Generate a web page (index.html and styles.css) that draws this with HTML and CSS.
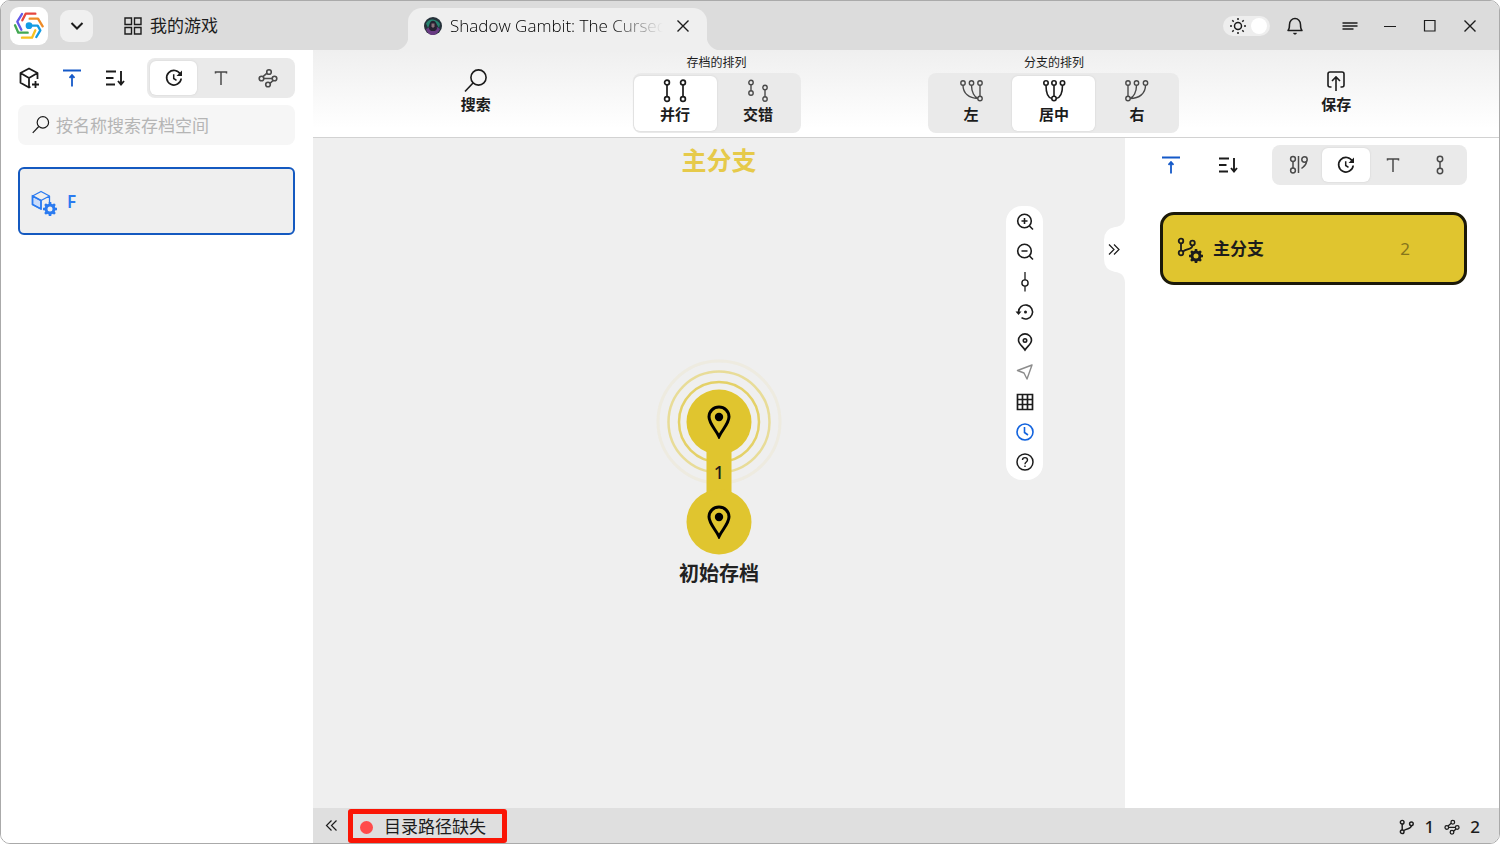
FILE: index.html
```html
<!DOCTYPE html>
<html lang="zh-CN">
<head>
<meta charset="utf-8">
<title>我的游戏</title>
<link rel="stylesheet" href="styles.css">
</head>
<body>
<svg class="defs" aria-hidden="true">
  <symbol id="sort-top" viewBox="0 0 20 20"><path d="M1 2.500h18" stroke-width="2"/><path d="M10 18.500V7.500M7.500 9.800L10 7l2.500 2.800" stroke-width="1.800"/></symbol>
  <symbol id="sort-down" viewBox="0 0 20 20"><path d="M1 3.500h10M1 10h7.500M1 16.500h9M16 3v13M13 13l3 3.500 3-3.500" stroke-width="1.900"/></symbol>
  <symbol id="recent" viewBox="0 0 20 20"><path d="M16.500 6.500A7.300 7.300 0 1 0 17.200 10.500" stroke-width="1.700"/><path d="M18 2.500v5.500h-5.500z" fill="currentColor" stroke="none"/><path d="M9.700 6.300v4.200l2.800 1.800" stroke-width="1.500"/></symbol>
  <symbol id="letter" viewBox="0 0 20 20"><path d="M4.500 5.500V4h11v1.500M10 4v13" stroke-width="1.500"/></symbol>
  <symbol id="nodes" viewBox="0 0 20 20"><g stroke-width="1.600"><circle cx="3.500" cy="10.500" r="2.300"/><circle cx="16.500" cy="10.500" r="2.300"/><circle cx="11" cy="4" r="2.300"/><circle cx="10" cy="16.500" r="2.300"/><path d="M5.800 10.500h8.400M5 8.700l4-3.500M12 15.300l3-2.800"/></g></symbol>
  <symbol id="magnifier" viewBox="0 0 24 24"><circle cx="14.500" cy="8.500" r="7.600"/><path d="M9 14l-8 8.500"/></symbol>
  <symbol id="branch" viewBox="0 0 20 20"><g stroke-width="1.800"><circle cx="4" cy="4" r="2.300"/><circle cx="4" cy="16" r="2.300"/><circle cx="15.500" cy="6" r="2.300"/><path d="M4 6.200v7.600M15.500 8.200c0 4.500-5 3-9.500 6.200"/></g></symbol>
  <symbol id="gear" viewBox="0 0 14 14"><circle cx="7" cy="7" r="4" stroke-width="3"/><path d="M7 0v2.500M7 11.500V14M0 7h2.500M11.500 7H14M2.050 2.050l1.800 1.800M10.150 10.150l1.800 1.800M2.050 11.950l1.800-1.800M10.150 3.850l1.800-1.800" stroke-width="2.600"/></symbol>
  <symbol id="pin" viewBox="0 0 24 34"><path d="M12 31.500C9 25 2 18.500 2 11.800a10 9.800 0 0 1 20 0C22 18.500 15 25 12 31.500z" stroke-width="3"/><circle cx="12" cy="12" r="4.200" fill="currentColor" stroke="none"/></symbol>
  <symbol id="close" viewBox="0 0 20 20"><path d="M4.500 4.500l11 11M15.500 4.500l-11 11" stroke-width="1.400"/></symbol>
</svg>
<div class="window">
  <header class="titlebar">
    <button class="logo" aria-label="主页">
      <svg viewBox="30 18 114 114" width="38" height="38" class="logo-art">
        <path d="M66 39L52 62l12 24" stroke="#6259e8"/><path d="M67 58l10-20h29" stroke="#e5473f"/><path d="M89 53h25l14 23" stroke="#ee8b27"/>
        <path d="M45 73l10 22h28" stroke="#43a853"/><path d="M66 110h30l10-22" stroke="#f7c120"/><path d="M87 74h26l8 14-12 20" stroke="#129ce4"/>
        <circle cx="87" cy="74" r="10" fill="#129ce4" stroke="none"/>
      </svg>
    </button>
    <button class="chevron" aria-label="展开"><svg class="i20" viewBox="0 0 20 20"><path d="M4.500 7l5.500 5.500L15.500 7" stroke-width="2"/></svg></button>
    <button class="home-tab"><svg class="i20" viewBox="0 0 20 20"><path d="M2 2h6.500v6.500H2zM11.500 2H18v6.500h-6.500zM2 11.500h6.500V18H2zM11.500 11.500H18V18h-6.500z" stroke-width="1.400"/></svg>我的游戏</button>
    <div class="tab">
      <svg class="avatar" viewBox="0 0 18 18"><circle cx="9" cy="9" r="9" fill="#26313a" stroke="none"/><path d="M2 6.500C3.500 3 7 2 9 2.500s5 1 7 4.500l-1 4-3-5H6l-2 5z" fill="#27836f" stroke="none"/><path d="M2 12l4-2 3 2 4-2 3 2c-2 4-4.500 6-7.500 6S3 15.500 2 12z" fill="#693a83" stroke="none"/><path d="M6 6c1-3 5-3 6 0l1 6-2 2H7l-2-2z" fill="#252131" stroke="none"/><path d="M7.500 6.500h3v3L9 11l-1.500-1.500z" fill="#89707b" stroke="none"/></svg>
      <span class="tab-title">Shadow Gambit: The Cursed</span>
      <button class="tab-close" aria-label="关闭标签"><svg class="i20"><use href="#close"/></svg></button>
    </div>
    <div class="window-actions">
      <button class="theme" role="switch" aria-checked="false" aria-label="主题"><svg class="i18" viewBox="0 0 18 18"><circle cx="9" cy="9" r="3.500" stroke-width="1.500"/><path d="M9 1v2M9 15v2M1 9h2M15 9h2M3.300 3.300l1.400 1.400M13.300 13.300l1.400 1.400M3.300 14.700l1.400-1.400M13.300 4.700l1.400-1.400" stroke-width="1.500"/></svg><span class="knob"></span></button>
      <button class="bell" aria-label="通知"><svg class="i20" viewBox="0 0 20 20"><path d="M3 14.500c1.500-1.500 1.500-3 1.500-6C4.500 5 7 2.500 10 2.500S15.500 5 15.500 8.500c0 3 0 4.500 1.500 6z" stroke-width="1.500" stroke-linejoin="round"/><path d="M8.500 17.200L10 18l1.500-.8" stroke-width="1.500"/></svg></button>
      <button aria-label="菜单"><svg class="i20" viewBox="0 0 20 20"><path d="M2.500 7h15M2.500 10h15M2.500 13h11" stroke-width="1.600"/></svg></button>
      <button aria-label="最小化"><svg class="i20" viewBox="0 0 20 20"><path d="M4 10.500h12" stroke-width="1.100"/></svg></button>
      <button aria-label="最大化"><svg class="i20" viewBox="0 0 20 20"><path d="M4.500 4.500h10.500v10.500H4.500z" stroke-width="1.200"/></svg></button>
      <button aria-label="关闭"><svg class="i20"><use href="#close"/></svg></button>
    </div>
  </header>
  <div class="workspace">
    <aside class="sidebar">
      <div class="side-tools">
        <button aria-label="新建"><svg class="i22" viewBox="0 0 22 22"><path d="M12.500 19.700L11 20.500l-8.500-4.700V6L11 1.500 19.500 6v6M2.500 6L11 11l8.500-5M11 11v9.500" stroke-width="1.800" stroke-linejoin="round"/><path d="M17.500 14v7M14 17.500h7" stroke-width="1.800"/></svg></button>
        <button class="blue" aria-label="升序"><svg class="i20"><use href="#sort-top"/></svg></button>
        <button aria-label="排序"><svg class="i20"><use href="#sort-down"/></svg></button>
        <div class="segment icons">
          <button class="selected" aria-label="时间"><svg class="i20"><use href="#recent"/></svg></button>
          <button aria-label="名称"><svg class="i20"><use href="#letter"/></svg></button>
          <button aria-label="数量"><svg class="i20"><use href="#nodes"/></svg></button>
        </div>
      </div>
      <label class="search"><svg class="i18"><use href="#magnifier"/></svg><input type="text" aria-label="按名称搜索存档空间" placeholder="按名称搜索存档空间"></label>
      <button class="space-card"><span class="badge-icon"><svg viewBox="0 0 20 20" width="20" height="20"><path d="M1.500 6L10 10.500v8.500l-8.500-4.500z" fill="#cbdcfa"/><path d="M10 19l-8.500-4.500V6L10 1.500 18.500 6v7M1.500 6L10 10.500 18.500 6M10 10.500V19" stroke-width="1.300" stroke-linejoin="round"/></svg><svg class="badge"><use href="#gear"/></svg></span>F</button>
    </aside>
    <main class="main">
      <div class="toolbar">
        <button class="tool"><svg class="i24"><use href="#magnifier"/></svg>搜索</button>
        <div class="group"><span class="group-title">存档的排列</span>
          <div class="segment labelled">
            <button class="selected"><svg viewBox="0 0 26 24"><g stroke-width="1.700"><circle cx="5" cy="3.500" r="2.400"/><circle cx="5" cy="20" r="2.400"/><circle cx="21" cy="3.500" r="2.400"/><circle cx="21" cy="20" r="2.400"/><path d="M5 6v11.500M21 6v11.500"/></g></svg><span>并行</span></button>
            <button><svg viewBox="0 0 26 24"><g stroke-width="1.400"><circle cx="6" cy="3.500" r="2.200"/><circle cx="6" cy="14" r="2.200"/><circle cx="20" cy="8.500" r="2.200"/><circle cx="20" cy="20" r="2.200"/><path d="M6 5.700v6.100M20 10.700v7.100"/></g></svg><span>交错</span></button>
          </div>
        </div>
        <div class="group"><span class="group-title">分支的排列</span>
          <div class="segment labelled">
            <button><svg viewBox="0 0 26 24"><g stroke-width="1.400"><circle cx="5" cy="4" r="2.200"/><circle cx="13.500" cy="4" r="2.200"/><circle cx="22" cy="4" r="2.200"/><circle cx="22" cy="19.500" r="2.200"/><path d="M5 6.200c0 8 6 13.300 14.800 13.300M13.500 6.200c0 7 3 12 6.500 13.300M22 6.200v11"/></g></svg><span>左</span></button>
            <button class="selected"><svg viewBox="0 0 26 24"><g stroke-width="1.600"><circle cx="5" cy="4" r="2.200"/><circle cx="13" cy="4" r="2.200"/><circle cx="21.500" cy="4" r="2.200"/><circle cx="13" cy="19.500" r="2.200"/><path d="M5 6.200c0 6 1 12.500 6 13.300M13 6.200v11M21.500 6.200c0 6-1 12.500-6.500 13.300"/></g></svg><span>居中</span></button>
            <button><svg viewBox="0 0 26 24"><g stroke-width="1.400"><circle cx="4" cy="4" r="2.200"/><circle cx="12.500" cy="4" r="2.200"/><circle cx="21.500" cy="4" r="2.200"/><circle cx="4" cy="19.500" r="2.200"/><path d="M21.500 6.200c0 8-6 13.300-15.300 13.300M12.500 6.200c0 7-3 12-6.500 13.300M4 6.200v11"/></g></svg><span>右</span></button>
          </div>
        </div>
        <button class="tool"><svg class="i24" viewBox="0 0 24 24"><path d="M7.500 18H6a2 2 0 0 1-2-2V5a2 2 0 0 1 2-2h12a2 2 0 0 1 2 2v11a2 2 0 0 1-2 2h-1.500M12 22V8.500M8 12l4-4 4 4" stroke-width="1.600"/></svg>保存</button>
      </div>
      <div class="content">
        <section class="canvas">
          <h1>主分支</h1>
          <figure class="graph">
            <svg viewBox="0 0 128 200" width="128" height="200">
              <g stroke="#e0c52f"><circle cx="64" cy="64" r="40" stroke-width="2.500" opacity=".7"/><circle cx="64" cy="64" r="50.500" stroke-width="2.500" opacity=".45"/><circle cx="64" cy="64" r="61" stroke-width="3" opacity=".08"/></g>
              <g fill="#e0c52f" stroke="none"><circle cx="64" cy="64" r="32.500"/><path d="M51.500 80h25v60h-25z"/><circle cx="64" cy="164" r="32.500"/></g>
              <use href="#pin" x="52" y="47" width="24" height="34"/><use href="#pin" x="52" y="147" width="24" height="34"/>
              <text class="edge-count" x="64" y="121" text-anchor="middle">1</text>
            </svg>
            <figcaption>初始存档</figcaption>
          </figure>
          <div class="canvas-tools">
            <button aria-label="放大"><svg class="i20" viewBox="0 0 20 20"><circle cx="9.500" cy="9" r="6.800"/><path d="M14.500 14l3.500 3.500M6.500 9h6M9.500 6v6"/></svg></button>
            <button aria-label="缩小"><svg class="i20" viewBox="0 0 20 20"><circle cx="9.500" cy="9" r="6.800"/><path d="M14.500 14l3.500 3.500M6.500 9h6"/></svg></button>
            <button aria-label="节点"><svg class="i20" viewBox="0 0 20 20"><circle cx="10" cy="11" r="3.100" stroke-width="1.400"/><path d="M10 0v8M10 14v5.500" stroke-width="1.300"/></svg></button>
            <button aria-label="还原"><svg class="i20" viewBox="0 0 20 20"><path d="M3.500 10a7 7 0 1 1 3 5.700"/><path d="M.5 9.500h6l-3 3.500z" fill="currentColor" stroke="none"/><circle cx="10.500" cy="10" r="1.500" fill="currentColor" stroke="none"/></svg></button>
            <button aria-label="定位"><svg class="i20" viewBox="0 0 20 20"><path d="M10 18C8 14.500 3.500 12 3.500 8.200a6.500 6.300 0 0 1 13 0C16.500 12 12 14.500 10 18z"/><circle cx="10" cy="8.500" r="1.700"/></svg></button>
            <button class="muted" aria-label="导航"><svg class="i20" viewBox="0 0 20 20"><path d="M17 3L2.500 8.500 9 11l3 6z" stroke-width="1.400" stroke-linejoin="round"/></svg></button>
            <button aria-label="网格"><svg class="i20" viewBox="0 0 20 20"><path d="M2.500 2.500h15v15h-15zM7.500 2.500v15M12.500 2.500v15M2.500 7.500h15M2.500 12.500h15" stroke-width="1.700"/></svg></button>
            <button class="bright" aria-label="时间"><svg class="i20" viewBox="0 0 20 20"><circle cx="10" cy="10" r="8"/><path d="M9.500 5v5.500L13 13"/></svg></button>
            <button aria-label="帮助"><svg class="i20" viewBox="0 0 20 20"><circle cx="10" cy="10" r="8" stroke-width="1.500"/><path d="M7.500 8c0-3.200 5-3.200 5 0 0 2-2.500 2-2.500 4.200M10 13.500V15" stroke-width="1.400"/></svg></button>
          </div>
          <button class="handle" aria-label="收起面板"><svg viewBox="0 0 22 66" width="22" height="66"><path d="M22 0c0 6-4 9.500-10 10Q1 12 1 23v19q0 11 11 13c6 .5 10 4 10 11z" fill="#fff" stroke="none"/><path d="M6 27.500l5 5-5 5M11 27.500l5 5-5 5" stroke-width="1.200"/></svg></button>
        </section>
        <aside class="panel">
          <div class="panel-tools">
            <button class="blue" aria-label="升序"><svg class="i20"><use href="#sort-top"/></svg></button>
            <button aria-label="排序"><svg class="i20"><use href="#sort-down"/></svg></button>
            <div class="segment icons">
              <button aria-label="分支"><svg class="i20" viewBox="0 0 20 20"><g stroke-width="1.500"><circle cx="4" cy="4" r="2.400"/><circle cx="4" cy="15.500" r="2.400"/><path d="M4 6.400v6.700M9.500 1v17"/><circle cx="15.500" cy="4.500" r="2.700"/><path d="M17.500 6.500c0 3.500-2 4.500-5 7"/></g></svg></button>
              <button class="selected" aria-label="时间"><svg class="i20"><use href="#recent"/></svg></button>
              <button aria-label="名称"><svg class="i20"><use href="#letter"/></svg></button>
              <button aria-label="数量"><svg class="i20" viewBox="0 0 20 20"><g stroke-width="1.500"><circle cx="10" cy="4" r="2.700"/><circle cx="10" cy="16" r="2.700"/><path d="M10 6.700v6.600"/></g></svg></button>
            </div>
          </div>
          <button class="branch-card"><span class="badge-icon"><svg width="20" height="20"><use href="#branch"/></svg><svg class="badge"><use href="#gear"/></svg></span><span class="branch-name">主分支</span><span class="branch-count">2</span></button>
        </aside>
      </div>
      <footer class="status">
        <button class="collapse" aria-label="收起侧栏"><svg class="i20" viewBox="0 0 20 20"><path d="M10.500 4.500l-5 5 5 5M15.500 4.500l-5 5 5 5" stroke-width="1.200"/></svg></button>
        <div class="alert"><span class="dot"></span>目录路径缺失</div>
        <div class="totals"><svg class="i16"><use href="#branch"/></svg><span>1</span><svg class="i16"><use href="#nodes"/></svg><span>2</span></div>
      </footer>
    </main>
  </div>
</div>
</body>
</html>
```

FILE: styles.css
```css
* { box-sizing: border-box; }
body {
  margin: 0;
  background: #fff;
  color: #1c1c1c;
  font: 17px/24px "Noto Sans", "Noto Sans CJK SC", sans-serif;
}
button {
  display: flex;
  align-items: center;
  justify-content: center;
  padding: 0;
  border: 0;
  background: none;
  color: inherit;
  font: inherit;
}
svg { flex: none; display: block; fill: none; stroke: currentColor; stroke-width: 1.6; }
.defs { position: absolute; width: 0; height: 0; }
.i16 { width: 16px; height: 16px; }
.i18 { width: 18px; height: 18px; }
.i20 { width: 20px; height: 20px; }
.i22 { width: 22px; height: 22px; }
.i24 { width: 24px; height: 24px; }
.blue { color: #1459c8; }
.bright { color: #1263de; }
.muted { color: #8c8c8c; }

.window {
  display: flex;
  flex-direction: column;
  min-height: 100vh;
  border: 1px solid #aaa;
  border-radius: 10px;
  overflow: hidden;
}
.titlebar { display: flex; align-items: center; height: 49px; padding: 0 9px; background: #dcdcdc; }
.logo { width: 38px; height: 38px; border-radius: 9px; background: #fff; }
.logo-art { stroke-width: 7; stroke-linejoin: round; stroke-linecap: round; }
.chevron { width: 33px; height: 32px; margin-left: 12px; border-radius: 9px; background: #f0f0f0; }
.home-tab { flex: 0 0 315px; justify-content: flex-start; gap: 7px; padding-left: 30px; }
.tab {
  position: relative;
  display: flex;
  align-items: center;
  align-self: flex-end;
  width: 299px;
  height: 42px;
  padding: 0 14px 7px 16px;
  border-radius: 14px 14px 0 0;
  background: #efefef;
}
.tab::before, .tab::after { content: ""; position: absolute; bottom: 0; width: 14px; height: 14px; }
.tab::before { right: 100%; background: radial-gradient(circle at 0 0, #dcdcdc 14px, #efefef 15px); }
.tab::after { left: 100%; background: radial-gradient(circle at 100% 0, #dcdcdc 14px, #efefef 15px); }
.avatar { width: 18px; height: 18px; }
.tab-title {
  flex: 1;
  min-width: 0;
  margin-left: 8px;
  overflow: hidden;
  white-space: nowrap;
  font-family: "Open Sans", sans-serif;
  font-weight: 300;
  color: #000;
  -webkit-mask-image: linear-gradient(90deg, #000 75%, transparent);
  mask-image: linear-gradient(90deg, #000 75%, transparent);
}
.tab-close { margin-left: 10px; }
.window-actions { display: flex; align-items: center; margin-left: auto; }
.window-actions button { width: 40px; height: 32px; }
.window-actions .theme { width: 47px; height: 20px; gap: 4px; padding: 0 2px 0 4px; border-radius: 10px; background: #eee; }
.knob { width: 16px; height: 16px; border-radius: 50%; background: #fff; }
.window-actions .bell { width: 50px; margin-right: 10px; }

.workspace { display: flex; flex: 1; }
.sidebar { flex: none; width: 312px; padding: 8px 18px 0 17px; background: #fff; }
.side-tools { display: flex; align-items: center; }
.side-tools > button { width: 22px; margin-right: 21px; }
.segment { display: flex; padding: 3px; border-radius: 8px; background: #eaeaea; }
.segment button { flex: 1; border-radius: 6px; color: #4a4a4a; }
.segment .selected { background: #fff; color: #1c1c1c; box-shadow: 0 0 2px #ccc; }
.segment.icons { height: 40px; }
.side-tools .segment { flex: 1; }
.search { display: flex; align-items: center; gap: 6px; height: 40px; margin-top: 7px; padding: 0 14px; border-radius: 8px; background: #f6f6f6; }
.search input { flex: 1; min-width: 0; padding: 2px 0 0; border: 0; outline: 0; background: none; font: inherit; }
.search input::placeholder { color: #b5b5b5; opacity: 1; }
.space-card {
  justify-content: flex-start;
  gap: 10px;
  width: 100%;
  height: 68px;
  margin-top: 22px;
  padding: 1px 0 0 11px;
  border: 2px solid #1459c0;
  border-radius: 6px;
  background: #efefef;
  color: #2b7bf0;
  font-weight: 600;
}
.badge-icon { position: relative; width: 26px; height: 24px; }
.badge { position: absolute; right: 0; bottom: -2px; width: 14px; height: 14px; }

.main { display: flex; flex: 1; flex-direction: column; min-width: 0; }
.toolbar {
  display: flex;
  justify-content: space-evenly;
  height: 88px;
  padding: 0 6px;
  border-bottom: 1px solid #d2d2d2;
  background: linear-gradient(#efefef, #fff 90%);
}
.tool { flex-direction: column; align-self: flex-start; width: 58px; padding-top: 19px; font-size: 15px; line-height: 22px; font-weight: 700; }
.group { padding-top: 3px; text-align: center; }
.group-title { display: block; font-size: 12px; line-height: 20px; }
.segment.labelled { height: 60px; padding: 3px 1px 2px; }
.labelled button { flex: none; flex-direction: column; width: 83px; padding-bottom: 3px; font-size: 15px; line-height: 22px; font-weight: 700; }
.labelled span { color: #1c1c1c; }
.labelled svg { width: 26px; height: 24px; }
.content { display: flex; flex: 1; }
.canvas { position: relative; flex: 1; min-width: 0; background: #efefef; }
.canvas h1 { margin: 0; padding-top: 6px; color: #e6ca4a; font-size: 25px; line-height: 32px; text-align: center; }
.graph { display: flex; flex-direction: column; align-items: center; margin: 182px 0 0; color: #000; }
.edge-count { fill: #1c1c1c; stroke: none; font-size: 18px; font-weight: 500; }
.graph figcaption { margin-top: 2px; color: #222; font-size: 20px; line-height: 28px; font-weight: 700; }
.canvas-tools { position: absolute; top: 68px; right: 82px; width: 37px; padding: 1px 0 3px; border-radius: 16px; background: #fff; }
.canvas-tools button { width: 100%; height: 30px; }
.handle { position: absolute; top: 79px; right: 0; }
.panel { width: 374px; padding: 7px 32px 0 35px; background: #fff; }
.panel-tools { display: flex; align-items: center; }
.panel-tools > button { width: 22px; margin-right: 35px; }
.panel-tools .segment { width: 195px; margin-left: auto; }
.panel-tools > button:nth-child(2) { margin-right: 0; }
.branch-card {
  justify-content: flex-start;
  width: 100%;
  height: 73px;
  margin-top: 27px;
  padding: 0 54px 0 14px;
  border: 3px solid #1b1909;
  border-radius: 14px;
  background: #e0c52f;
}
.branch-name { margin-left: 10px; font-weight: 700; }
.branch-count { margin-left: auto; color: #86751c; }
.status { display: flex; align-items: center; height: 35px; padding: 1px 19px 0 0; background: #dfdfdf; }
.collapse { width: 35px; }
.alert { display: flex; align-items: center; gap: 11px; height: 34px; padding: 2px 16px 0 7px; border: 5px solid #fa1505; border-radius: 3px; }
.dot { width: 13px; height: 13px; border-radius: 50%; background: #ff4b4b; }
.totals { display: flex; align-items: center; gap: 10px; margin-left: auto; padding-top: 1px; font-weight: 500; }
```
